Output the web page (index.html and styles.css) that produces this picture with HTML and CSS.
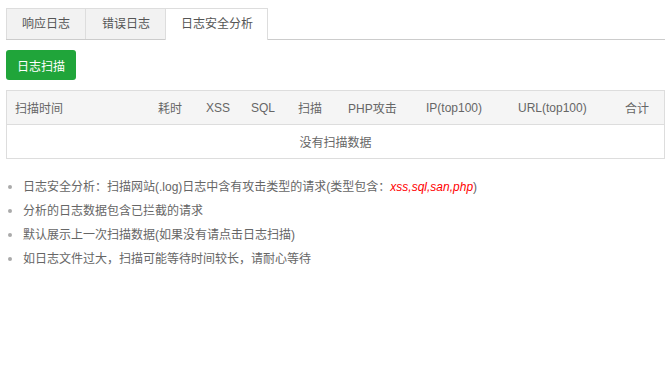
FILE: index.html
```html
<!DOCTYPE html>
<html lang="zh-CN">
<head>
	<meta charset="UTF-8">
	<title>日志安全分析</title>
	<link rel="stylesheet" href="styles.css">
</head>
<body>
	<div class="wrap">
		<ul class="tabs">
			<li>响应日志</li>
			<li>错误日志</li>
			<li class="on">日志安全分析</li>
		</ul>
		<button class="btn">日志扫描</button>
		<table class="scan">
			<thead>
				<tr>
					<th>扫描时间</th>
					<th>耗时</th>
					<th>XSS</th>
					<th>SQL</th>
					<th>扫描</th>
					<th>PHP攻击</th>
					<th>IP(top100)</th>
					<th>URL(top100)</th>
					<th>合计</th>
				</tr>
			</thead>
			<tbody>
				<tr><td colspan="9" class="empty">没有扫描数据</td></tr>
			</tbody>
		</table>
		<ul class="help">
			<li>日志安全分析：扫描网站(.log)日志中含有攻击类型的请求(类型包含：<em>xss,sql,san,php</em>)</li>
			<li>分析的日志数据包含已拦截的请求</li>
			<li>默认展示上一次扫描数据(如果没有请点击日志扫描)</li>
			<li>如日志文件过大，扫描可能等待时间较长，请耐心等待</li>
		</ul>
	</div>
</body>
</html>
```

FILE: styles.css
```css
body{margin: 0;background: #fff;font-family: "Liberation Sans", "Noto Sans CJK SC", sans-serif;font-size: 12px;color: #666;}
ul,li{padding: 0;margin: 0;list-style: none;}
.wrap{padding: 8px 5px 0 6px;}

.tabs{display: flex;border-bottom: 1px solid #ccc;height: 31px;}
.tabs li{height: 30px;line-height: 30px;padding: 0 15px;white-space: nowrap;border: 1px solid #ddd;border-bottom: none;border-right: none;background: #f2f2f2;color: #555;}
.tabs li:nth-child(2){padding: 0 15px 0 16px;}
.tabs li.on{background: #fff;height: 31px;border-right: 1px solid #ddd;padding: 0 14px 0 15px;margin-bottom: -1px;}

.btn{display: block;margin-top: 10px;width: 70px;height: 30px;border: none;border-radius: 3px;background: #20a53a;color: #fff;font-family: inherit;font-size: 12px;padding: 0;}

.scan{margin-top: 10px;width: 659px;border-collapse: collapse;table-layout: fixed;border: 1px solid #ddd;}
.scan th{height: 33px;background: #f5f5f5;font-weight: normal;text-align: left;padding: 0 0 0 8px;color: #666;border-bottom: 1px solid #ddd;}
.scan th:nth-child(1){width: 135px;}
.scan th:nth-child(2){width: 40px;}
.scan th:nth-child(3){width: 37px;}
.scan th:nth-child(4){width: 39px;}
.scan th:nth-child(5){width: 42px;}
.scan th:nth-child(6){width: 70px;}
.scan th:nth-child(7){width: 84px;}
.scan th:nth-child(8){width: 99px;}
.scan td.empty{height: 33px;text-align: center;padding: 0;}

.help{margin-top: 16px;padding-left: 2px;}
.help li{line-height: 24px;display: flex;align-items: center;}
.help li:before{content: "";width: 4px;height: 4px;border-radius: 50%;background: #aaa;margin-right: 11px;flex: none;}
.help em{color: #f00;font-style: italic;}
```
